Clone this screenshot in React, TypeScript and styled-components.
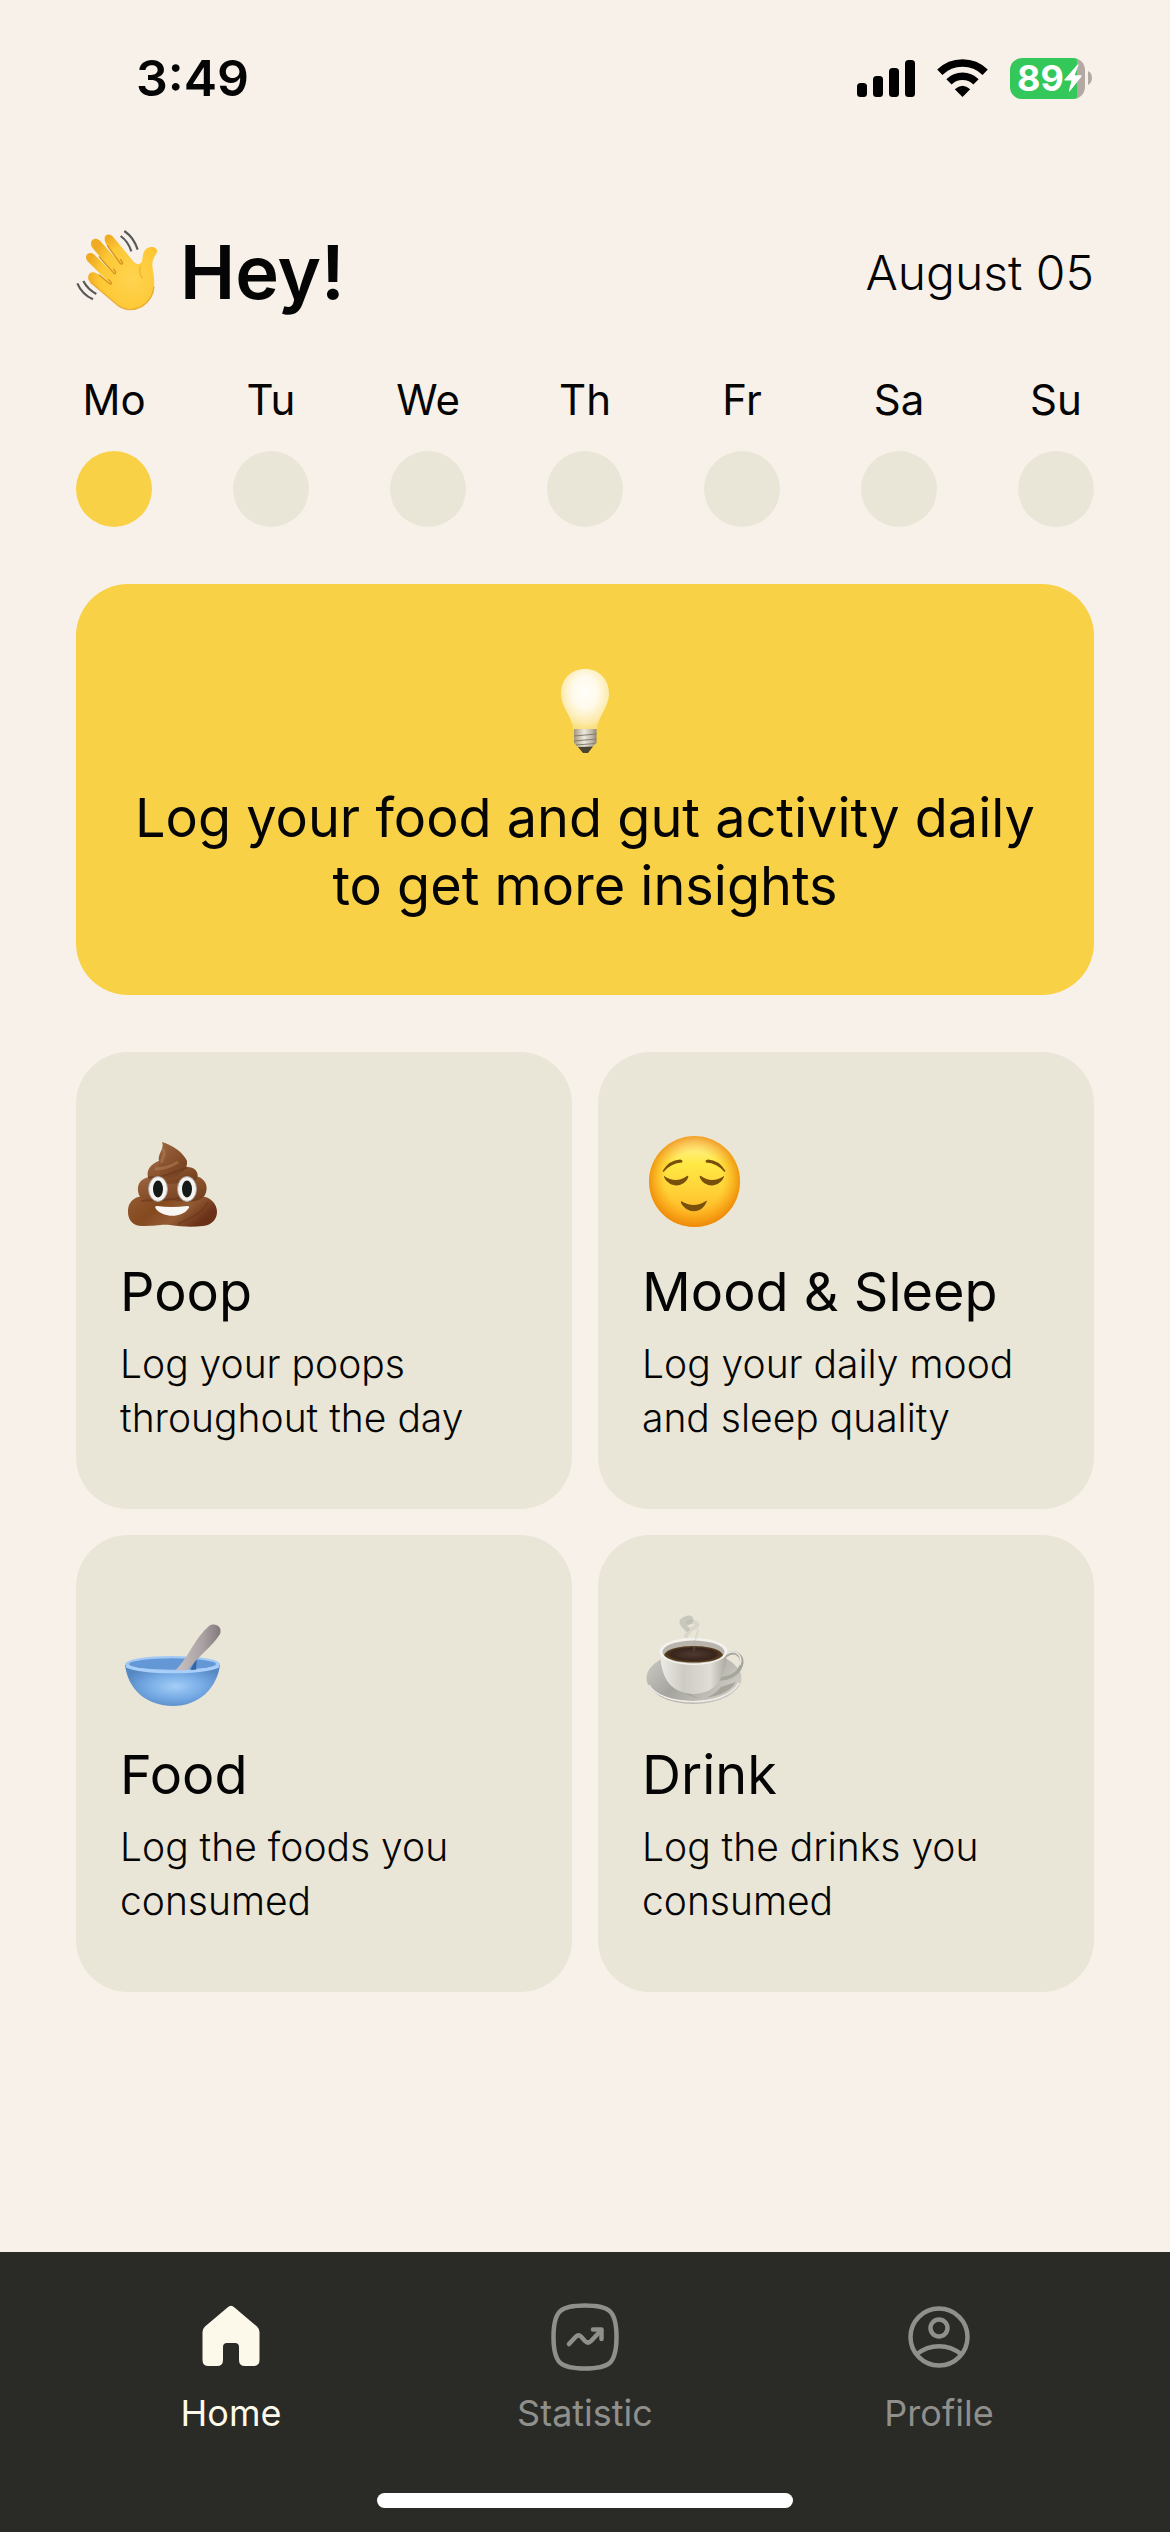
import React from "react";
import styled, { createGlobalStyle } from "styled-components";

const color = {
  page: "#f8f1e9",
  panel: "#e9e6d7",
  accent: "#f8d147",
  ink: "#050505",
  bar: "#2a2a26",
  barActive: "#fcf9eb",
  barMuted: "#8f8f8c",
};

const GlobalStyle = createGlobalStyle`
  * { box-sizing: border-box; }
  body {
    margin: 0;
    background: ${color.page};
    color: ${color.ink};
    font-family: Inter, "Liberation Sans", sans-serif;
  }
  h1, h2, p { margin: 0; }
  svg { display: block; flex: none; overflow: visible; }
`;

const Screen = styled.div`
  min-height: 100vh;
  display: flex;
  flex-direction: column;
`;

const StatusBar = styled.div`
  height: 156px;
  padding: 0 78px 0 136px;
  display: flex;
  align-items: center;
  justify-content: space-between;
`;

const Clock = styled.time`
  font-size: 50px;
  font-weight: 600;
`;

const StatusIcons = styled.div`
  display: flex;
  align-items: center;
  gap: 22px;
`;

const Battery = styled.div`
  display: flex;
  align-items: center;
  gap: 3px;
`;

const BatteryBody = styled.div`
  width: 75px;
  height: 41px;
  padding-left: 7px;
  border-radius: 12px;
  display: flex;
  align-items: center;
  background: linear-gradient(to right, #34c759 89%, #b1a9a2 89%);
  color: #fff;
  font-size: 36px;
  font-weight: 700;
`;

const Content = styled.main`
  flex: 1;
  padding: 72px 76px 0;
`;

const Header = styled.header`
  display: flex;
  align-items: center;
  justify-content: space-between;
  height: 88px;
`;

const Greeting = styled.h1`
  display: flex;
  align-items: center;
  gap: 20px;
  font-size: 74px;
  font-weight: 600;
  line-height: 88px;
`;

const Today = styled.time`
  font-size: 48px;
  font-weight: 300;
`;

const Week = styled.ul`
  list-style: none;
  margin: 60px 0 0;
  padding: 0;
  display: flex;
  justify-content: space-between;
`;

const Day = styled.li`
  width: 76px;
  display: flex;
  flex-direction: column;
  align-items: center;
  gap: 27px;
  font-size: 42px;
  line-height: 48px;
`;

const Dot = styled.span<{ $active: boolean }>`
  width: 76px;
  height: 76px;
  border-radius: 50%;
  background: ${(p) => (p.$active ? color.accent : color.panel)};
`;

const Banner = styled.section`
  margin-top: 57px;
  padding: 82px 40px 75px;
  border-radius: 52px;
  background: ${color.accent};
  display: flex;
  flex-direction: column;
  align-items: center;
  gap: 28px;
`;

const BannerText = styled.p`
  font-size: 54px;
  line-height: 68px;
  text-align: center;
`;

const Grid = styled.section`
  margin: 57px 0;
  display: grid;
  grid-template-columns: 1fr 1fr;
  gap: 26px;
`;

const Card = styled.button`
  padding: 82px 44px 64px;
  border: 0;
  border-radius: 52px;
  background: ${color.panel};
  color: inherit;
  font: inherit;
  text-align: left;
  display: flex;
  flex-direction: column;
  align-items: flex-start;
`;

const CardTitle = styled.span`
  margin: 32px 0 15px;
  font-size: 54px;
  line-height: 60px;
`;

const CardText = styled.span`
  font-size: 39px;
  font-weight: 300;
  line-height: 54px;
`;

const TabBar = styled.footer`
  padding: 49px 54px 24px;
  background: ${color.bar};
`;

const Tabs = styled.nav`
  display: flex;
`;

const Tab = styled.a<{ $active?: boolean }>`
  flex: 1;
  display: flex;
  flex-direction: column;
  align-items: center;
  gap: 20px;
  color: ${(p) => (p.$active ? color.barActive : color.barMuted)};
  font-size: 36px;
  line-height: 40px;
  text-decoration: none;
`;

const HomeIndicator = styled.div`
  width: 416px;
  height: 15px;
  margin: 60px auto 0;
  border-radius: 8px;
  background: #fff;
`;

const Signal = () => (
  <svg width="58" height="38" viewBox="0 0 58 38" aria-hidden="true">
    <rect x="0" y="24" width="10" height="14" rx="3.5" />
    <rect x="16" y="17" width="10" height="21" rx="3.5" />
    <rect x="32" y="9" width="10" height="29" rx="3.5" />
    <rect x="48" y="1" width="10" height="37" rx="3.5" />
  </svg>
);

const Wifi = () => (
  <svg width="51" height="38" viewBox="0 0 51 38" aria-hidden="true">
    <g fill="none" stroke="#000" strokeWidth="7.5">
      <path d="M2.800 13.200A32.500 32.500 0 0 1 48.200 13.200" />
      <path d="M12 22.800A19.200 19.200 0 0 1 39 22.800" />
    </g>
    <path d="M25.500 38L17.800 30.200Q25.500 23.200 33.200 30.200Z" />
  </svg>
);

const Bolt = () => (
  <svg width="18" height="28" viewBox="0 0 18 28" aria-hidden="true">
    <path d="M13.500 0.500L0.500 15.500Q0 16.500 1 16.500H7.500L4.800 27Q5 28 6 27L17.500 12.500Q18 11.300 17 11.300H10.700L14.500 1Q14.500 0 13.500 0.500Z" fill="#fff" />
  </svg>
);

const BatteryCap = () => (
  <svg width="4" height="14" viewBox="0 0 4 14" aria-hidden="true">
    <path d="M0 0Q4 2 4 7T0 14Z" fill="#b1a9a2" />
  </svg>
);

const Wave = () => (
  <svg width="84" height="84" viewBox="18 15 252 252" aria-hidden="true">
    <defs>
      <radialGradient id="hand" cx="0.65" cy="0.58" r="0.64">
        <stop offset="0" stopColor="#ffd450" />
        <stop offset="0.7" stopColor="#fdc835" />
        <stop offset="1" stopColor="#f0ab22" />
      </radialGradient>
    </defs>
    <path
      d="M104 42C103 27 118 25 127 33L186 104C197 120 209 120 215 110C220 98 215 84 229 71C245 60 263 68 261 80C257 93 246 103 247 120C248 140 255 155 252 185C250 215 235 232 215 245C190 258 165 256 143 241L61 172C50 162 53 144 67 142C76 141 82 146 88 150L122 177L54 110C43 98 48 84 62 84C70 84 76 92 82 98L132 146L68 69C58 56 63 41 78 41C86 41 91 48 96 54L152 117L108 56C105 51 104 48 104 42Z"
      fill="url(#hand)"
    />
    <g fill="none" stroke="#d6911c" strokeWidth="4" strokeLinecap="round">
      <path d="M112 62L150 114Q156 121 158 114L152 104" />
      <path d="M88 96L130 143Q137 150 137 141L131 132" />
      <path d="M88 150L117 175Q125 181 124 173L116 164" />
    </g>
    <path d="M61 172L143 241C165 256 190 258 215 245C235 232 250 215 252 185" fill="none" stroke="#e39a1c" strokeWidth="4" opacity="0.7" />
    <path d="M212 122Q204 145 218 160" fill="none" stroke="#f3b42c" strokeWidth="4" />
    <g fill="none" stroke="#58585a" strokeWidth="6.5">
      <path d="M152 33Q175 50 184 79" />
      <path d="M163 18Q192 38 203 74" />
      <path d="M40 168Q53 193 79 207" />
      <path d="M22 175Q36 208 69 223" />
    </g>
  </svg>
);

const Bulb = () => (
  <svg width="52" height="90" viewBox="0 0 52 90" aria-hidden="true">
    <defs>
      <radialGradient id="glow" cx="0.5" cy="0.38" r="0.6">
        <stop offset="0" stopColor="#fffefa" />
        <stop offset="0.45" stopColor="#fffaea" />
        <stop offset="0.85" stopColor="#fceaa9" />
        <stop offset="1" stopColor="#fae07f" />
      </radialGradient>
      <linearGradient id="screw">
        <stop offset="0" stopColor="#a4977c" />
        <stop offset="0.45" stopColor="#eee9df" />
        <stop offset="0.8" stopColor="#bdb5a7" />
        <stop offset="1" stopColor="#8f8674" />
      </linearGradient>
    </defs>
    <path d="M26 3C12 3 2 13 2 28C2 41 12 48 14.500 64H37.500C40 48 50 41 50 28C50 13 40 3 26 3Z" fill="url(#glow)" />
    <path d="M15 63H37.500V77L32 82H20L15 77Z" fill="url(#screw)" />
    <path d="M15 70L37.500 68M15 75L37.500 73M17 79L36 77.500" stroke="#857d70" strokeWidth="1.200" />
    <path d="M19 81L34 80.500L29 87H24Z" fill="#4c4333" />
  </svg>
);

const Poop = () => (
  <svg width="96" height="96" viewBox="-4 -8 96 96" aria-hidden="true">
    <defs>
      <linearGradient id="brown" x1="0" y1="0" x2="0.7" y2="1">
        <stop offset="0" stopColor="#9c6743" />
        <stop offset="0.55" stopColor="#8a512d" />
        <stop offset="1" stopColor="#73401f" />
      </linearGradient>
      <linearGradient id="brownBase" x1="0" y1="0" x2="1" y2="0.4">
        <stop offset="0" stopColor="#935a32" />
        <stop offset="0.4" stopColor="#85491f" />
        <stop offset="0.7" stopColor="#935b34" />
        <stop offset="1" stopColor="#6a3018" />
      </linearGradient>
    </defs>
    <path d="M20 54C6 55 4 64 4 70C4 78 9 84 18 84C32 84 37 82 46 83C59 85 69 85 79 84C88 83 93 77 93 70C93 62 87 55 77 54Z" fill="url(#brownBase)" />
    <path d="M25 35C15 37 12 44 15 53C18 60 31 59 45 58C61 60 75 62 81 53C86 43 79 34 70 34Z" fill="url(#brown)" />
    <path d="M37 18C25 22 21 30 25 38C34 45 49 42 72 38C76 34 73 25 64 25Z" fill="url(#brown)" />
    <path d="M38 0C48 3 59 10 63 19C64 28 56 34 45 36C38 37 33 31 35 19C33 12 41 7 38 0Z" fill="url(#brown)" />
    <path d="M24 35C37 38 55 27 63 26M60 54C49 60 33 57 17 59M54 82C64 77 78 72 84 60" fill="none" stroke="#67371d" strokeWidth="1.600" opacity="0.65" />
    <path d="M39 7C43 15 36 17 38 21M31 27Q43 27 54 20" fill="none" stroke="#b4815d" strokeWidth="3" opacity="0.5" />
    <g>
      <ellipse cx="34" cy="47" rx="9.500" ry="12.500" fill="#f5f4f2" stroke="#a6a09b" />
      <ellipse cx="63" cy="47" rx="9.500" ry="12.500" fill="#f5f4f2" stroke="#a6a09b" />
      <ellipse cx="34" cy="47" rx="5" ry="8.500" fill="#151a17" />
      <ellipse cx="63" cy="47" rx="5" ry="8.500" fill="#151a17" />
    </g>
    <path d="M33 64Q48 66 63 64Q67 64 64 67C58 76 39 76 32 67Q30 64 33 64Z" fill="#f8f7f5" />
  </svg>
);

const Relieved = () => (
  <svg width="96" height="96" viewBox="-2 0 96 96" aria-hidden="true">
    <defs>
      <linearGradient id="face" x1="0" y1="0" x2="0" y2="1">
        <stop offset="0" stopColor="#fff7b5" />
        <stop offset="0.3" stopColor="#ffe945" />
        <stop offset="0.6" stopColor="#ffd238" />
        <stop offset="1" stopColor="#ffad20" />
      </linearGradient>
      <radialGradient id="rim" cx="0.5" cy="0.49" r="0.52">
        <stop offset="0.6" stopColor="#f99b0a" stopOpacity="0" />
        <stop offset="1" stopColor="#ea8104" stopOpacity="0.9" />
      </radialGradient>
    </defs>
    <circle cx="50.500" cy="47.500" r="45.500" fill="url(#face)" />
    <circle cx="50.500" cy="47.500" r="45.500" fill="url(#rim)" />
    <g fill="#79500b">
      <path d="M18.500 37Q25 26 36 25.500Q39.500 26 38 28.500Q27 29 19.500 38Z" />
      <path d="M81.500 37Q75 26 64 25.500Q60.500 26 62 28.500Q73 29 80.500 38Z" />
      <path d="M20 42Q32 50 43 42Q45 41 44 44C39 54 25 54 20 43Z" />
      <path d="M80 42Q68 50 57 42Q55 41 56 44C61 54 75 54 80 43Z" />
      <path d="M37 67Q50 75 62 67Q64 66 62 69C57 80 43 80 37 69Z" />
    </g>
  </svg>
);

const Bowl = () => (
  <svg width="96" height="96" viewBox="-4 -6 96 96" aria-hidden="true">
    <defs>
      <radialGradient id="bowl" cx="0.53" cy="0.52" r="0.55">
        <stop offset="0" stopColor="#a4cff8" />
        <stop offset="0.55" stopColor="#75aae4" />
        <stop offset="1" stopColor="#5688c3" />
      </radialGradient>
      <linearGradient id="spoon">
        <stop offset="0" stopColor="#c9c2c2" />
        <stop offset="0.6" stopColor="#aaa1a2" />
        <stop offset="1" stopColor="#83797d" />
      </linearGradient>
    </defs>
    <path d="M1 42C4 67 23 83 49 83C75 83 93 65 96 42Z" fill="url(#bowl)" />
    <ellipse cx="48.500" cy="41" rx="47.500" ry="8" fill="#a3caf5" />
    <ellipse cx="48.500" cy="41" rx="43.500" ry="5.800" fill="#6397d6" />
    <path d="M73 34L66 48L72 47Z" fill="#3466a4" />
    <path d="M52 47C66 32 70 16 85 3C91 -1 99 4 96 11C88 24 75 32 64 47Q58 48 52 47Z" fill="url(#spoon)" />
    <path d="M2 43C20 51 78 51 95 43" fill="none" stroke="#a9cffa" strokeWidth="2.500" />
  </svg>
);

const Coffee = () => (
  <svg width="96" height="96" viewBox="-3 -5 96 96" aria-hidden="true">
    <defs>
      <linearGradient id="cup">
        <stop offset="0" stopColor="#eeece6" />
        <stop offset="0.35" stopColor="#cdcbc4" />
        <stop offset="0.75" stopColor="#e0ddd6" />
        <stop offset="1" stopColor="#aaa79d" />
      </linearGradient>
      <linearGradient id="saucer" x1="0" y1="0" x2="1" y2="0.5">
        <stop offset="0" stopColor="#d0cec7" />
        <stop offset="0.5" stopColor="#a5a49e" />
        <stop offset="1" stopColor="#cbc9c1" />
      </linearGradient>
      <radialGradient id="brew">
        <stop offset="0" stopColor="#503a32" />
        <stop offset="0.75" stopColor="#38251b" />
        <stop offset="1" stopColor="#604622" />
      </radialGradient>
    </defs>
    <ellipse cx="49" cy="56" rx="47.500" ry="26" fill="url(#saucer)" />
    <path d="M4 63C15 84 79 87 94 61" fill="none" stroke="#f2f0e9" strokeWidth="1.500" />
    <path d="M37 69Q60 85 76 65L91 60Q82 75 53 76Z" fill="#8f8d84" opacity="0.6" />
    <path d="M80 34C91 26 99 35 96 44C93 53 82 57 74 57" fill="none" stroke="#a6a69d" strokeWidth="3.500" />
    <path d="M80 33C91 25 98 34 95 43" fill="none" stroke="#eae8e0" strokeWidth="1.500" />
    <path d="M15 30C16 51 21 71 49 72C73 71 81 53 82 30Z" fill="url(#cup)" />
    <ellipse cx="48.500" cy="29.500" rx="34" ry="13.500" fill="#f5f3ef" />
    <ellipse cx="48.500" cy="30" rx="31" ry="11.500" fill="#b9b4ac" />
    <path d="M19 33C23 21 74 21 78 33C73 43 25 43 19 33Z" fill="url(#brew)" />
    <g fill="none" stroke="#aaa9a2" strokeLinecap="round">
      <path d="M42 7C37 2 34 -1 41 -3C46 -6 49 -1 42 1" strokeWidth="5" opacity="0.5" />
      <path d="M43 0C55 -1 55 5 46 7L41 14" strokeWidth="4" opacity="0.25" />
      <path d="M49 28Q50 17 53 8" strokeWidth="2" opacity="0.2" />
    </g>
  </svg>
);

const HomeIcon = () => (
  <svg width="72" height="72" viewBox="0 0 72 72" aria-hidden="true">
    <path d="M32.500 6.500Q36 3 39.500 6.500L62 25.500Q64.500 28 64.500 31V59Q64.500 65 58.500 65H50Q44 65 44 59V46Q44 42 40 42H32Q28 42 28 46V59Q28 65 22 65H13.500Q7.500 65 7.500 59V31Q7.500 28 10 25.500Z" fill="currentColor" />
  </svg>
);

const StatisticIcon = () => (
  <svg width="72" height="72" viewBox="0 0 72 72" aria-hidden="true" fill="none" stroke="currentColor" strokeLinecap="round" strokeLinejoin="round">
    <path d="M36 4.500C60 4.500 67.500 9 67.500 36S60 67.500 36 67.500S4.500 63 4.500 36S12 4.500 36 4.500Z" strokeWidth="4.500" />
    <path d="M20 43L27 35.500Q29.500 33 32 35.500L36 40Q39 43 42 40L52 29.500" strokeWidth="4.500" />
    <path d="M44 28.500H52.500V38" strokeWidth="4.500" />
  </svg>
);

const ProfileIcon = () => (
  <svg width="72" height="72" viewBox="0 0 72 72" aria-hidden="true" fill="none" stroke="currentColor" strokeWidth="4.500">
    <circle cx="36" cy="36" r="28.500" />
    <circle cx="36" cy="27" r="8.500" />
    <path d="M14 53C27 42.500 45 42.500 58 53" />
  </svg>
);

const days = ["Mo", "Tu", "We", "Th", "Fr", "Sa", "Su"];

const cards = [
  { title: "Poop", lines: ["Log your poops", "throughout the day"], Icon: Poop },
  { title: "Mood & Sleep", lines: ["Log your daily mood", "and sleep quality"], Icon: Relieved },
  { title: "Food", lines: ["Log the foods you", "consumed"], Icon: Bowl },
  { title: "Drink", lines: ["Log the drinks you", "consumed"], Icon: Coffee },
];

const tabs = [
  { label: "Home", Icon: HomeIcon },
  { label: "Statistic", Icon: StatisticIcon },
  { label: "Profile", Icon: ProfileIcon },
];

export default function App() {
  return (
    <Screen>
      <GlobalStyle />
      <StatusBar>
        <Clock>3:49</Clock>
        <StatusIcons>
          <Signal />
          <Wifi />
          <Battery>
            <BatteryBody>
              89
              <Bolt />
            </BatteryBody>
            <BatteryCap />
          </Battery>
        </StatusIcons>
      </StatusBar>
      <Content>
        <Header>
          <Greeting>
            <Wave />
            Hey!
          </Greeting>
          <Today>August 05</Today>
        </Header>
        <Week>
          {days.map((day, i) => (
            <Day key={day}>
              {day}
              <Dot $active={i === 0} />
            </Day>
          ))}
        </Week>
        <Banner>
          <Bulb />
          <BannerText>
            Log your food and gut activity daily
            <br />
            to get more insights
          </BannerText>
        </Banner>
        <Grid>
          {cards.map(({ title, lines, Icon }) => (
            <Card key={title} type="button">
              <Icon />
              <CardTitle>{title}</CardTitle>
              <CardText>
                {lines[0]}
                <br />
                {lines[1]}
              </CardText>
            </Card>
          ))}
        </Grid>
      </Content>
      <TabBar>
        <Tabs>
          {tabs.map(({ label, Icon }, i) => (
            <Tab key={label} href="#" $active={i === 0}>
              <Icon />
              {label}
            </Tab>
          ))}
        </Tabs>
        <HomeIndicator />
      </TabBar>
    </Screen>
  );
}
